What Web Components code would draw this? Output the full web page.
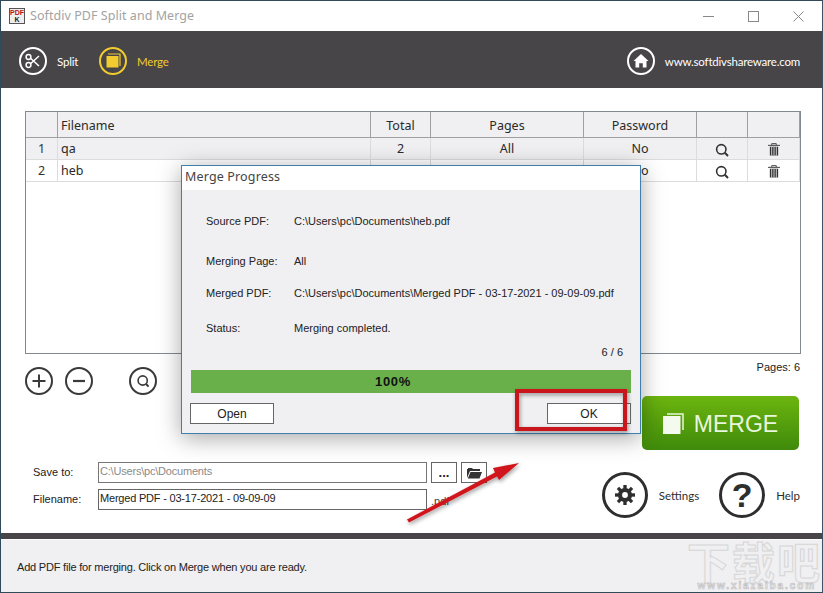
<!DOCTYPE html>
<html>
<head>
<meta charset="utf-8">
<style>
html, body { margin: 0; padding: 0; background: #fff; }
body { width: 823px; height: 593px; overflow: hidden; }
</style>
</head>
<body>
<app-window>
	<title-bar></title-bar>
	<nav-band></nav-band>
	<main-area></main-area>
	<status-bar>Add PDF file for merging. Click on Merge when you are ready.</status-bar>
	<merge-dialog></merge-dialog>
	<red-markup></red-markup>
</app-window>

<script>
const SEGOE = `"Noto Sans", "Open Sans", sans-serif`
const THIN = `Lato, "Open Sans", sans-serif`
const MSSANS = `"Liberation Sans", Arial, sans-serif`

const ICONS = {
	scissors: `<circle cx="9.5" cy="18" r="2.4" fill="none" stroke="currentColor" stroke-width="1.5"/><circle cx="9.5" cy="10" r="2.4" fill="none" stroke="currentColor" stroke-width="1.5"/><path d="M11.5 11.2 20 19M11.5 16.8 20 9" stroke="currentColor" stroke-width="1.5" fill="none"/>`,
	merge: `<path d="M9 7h12v12" fill="none" stroke="currentColor" stroke-width="1.2"/><rect x="7.5" y="9" width="12" height="11.5" fill="currentColor"/>`,
	home: `<path d="M14 7 21.5 14H19.5V20.5H15.8V16.3H12.2V20.5H8.5V14H6.5Z" fill="currentColor"/>`,
	plus: `<path d="M14 7.5V20.5M7.5 14H20.5" stroke="currentColor" stroke-width="2" fill="none"/>`,
	minus: `<path d="M8 14H20" stroke="currentColor" stroke-width="2.2" fill="none"/>`,
	search: `<circle cx="13.7" cy="13.5" r="4.6" fill="none" stroke="currentColor" stroke-width="1.6"/><path d="M17 17l2.6 2.6" stroke="currentColor" stroke-width="2" fill="none"/>`
}

// elements
class AppWindow extends HTMLElement {
	constructor() {
		super()
		this.attachShadow({mode: 'open'}).innerHTML = `
			<style>
				:host { display: flex; flex-direction: column; position: relative; box-sizing: border-box; width: 823px; height: 593px; border: 1px solid #2f4a58; border-right-color: #3a5564; background: #fff; overflow: hidden; }
			</style>
			<slot></slot>
		`
	}
}

class TitleBar extends HTMLElement {
	constructor() {
		super()
		this.attachShadow({mode: 'open'}).innerHTML = `
			<style>
				:host { display: flex; align-items: center; height: 30px; flex: none; padding-left: 8px; box-sizing: border-box; background: #fff; }
				.logo { width: 16px; height: 16px; border: 1px solid #555; box-sizing: border-box; background: #eee; font: bold 7px/7px ${MSSANS}; text-align: center; color: #b11; overflow: hidden; }
				.logo b { display: block; color: #222; }
				.name { margin-left: 5px; padding-bottom: 2px; font: 12.5px ${SEGOE}; letter-spacing: .05px; color: #a3a3a3; flex: 1; }
				svg { display: block; }
				.btns { display: flex; margin-right: 18px; gap: 34px; }
			</style>
			<div class="logo">PDF<b>K</b></div>
			<div class="name">Softdiv PDF Split and Merge</div>
			<div class="btns">
				<svg width="11" height="11"><path d="M0 5.5H11" stroke="#888"/></svg>
				<svg width="11" height="11"><rect x=".5" y=".5" width="10" height="10" fill="none" stroke="#888"/></svg>
				<svg width="11" height="11"><path d="M.5 .5 10.5 10.5M10.5 .5 .5 10.5" stroke="#888"/></svg>
			</div>
		`
	}
}

class RoundIcon extends HTMLElement {
	constructor() {
		super()
		const size = this.getAttribute('size') || 28
		const icon = ICONS[this.getAttribute('icon')] || ''
		this.attachShadow({mode: 'open'}).innerHTML = `
			<style>
				:host { display: block; width: ${size}px; height: ${size}px; flex: none; color: inherit; }
				svg { display: block; }
			</style>
			<svg width="${size}" height="${size}" viewBox="0 0 28 28">
				<circle cx="14" cy="14" r="13" fill="none" stroke="currentColor" stroke-width="2"/>${icon}
			</svg>
		`
	}
}

class NavItem extends HTMLElement {
	constructor() {
		super()
		this.attachShadow({mode: 'open'}).innerHTML = `
			<style>
				:host { display: flex; align-items: center; gap: 10px; color: #fff; font: 11.5px ${THIN}; letter-spacing: -.2px; }
				:host([active]) { color: #f2cc2e; }
			</style>
			<round-icon icon="${this.getAttribute('icon')}"></round-icon>
			<slot></slot>
		`
	}
}

class NavBand extends HTMLElement {
	constructor() {
		super()
		this.attachShadow({mode: 'open'}).innerHTML = `
			<style>
				:host { display: flex; align-items: center; height: 57px; flex: none; padding: 3px 22px 0 18px; box-sizing: border-box; background: #474548; }
				.first { width: 80px; }
				.fill { flex: 1; }
			</style>
			<nav-item class="first" icon="scissors">Split</nav-item>
			<nav-item icon="merge" active>Merge</nav-item>
			<div class="fill"></div>
			<nav-item icon="home">www.softdivshareware.com</nav-item>
		`
	}
}

class FileTable extends HTMLElement {
	constructor() {
		super()
		const search = `<svg width="14" height="14" viewBox="0 0 14 14"><circle cx="6.3" cy="6.3" r="4.7" fill="none" stroke="#333" stroke-width="1.6"/><path d="M9.8 9.8 13 13" stroke="#333" stroke-width="2"/></svg>`
		const bin = `<svg width="12" height="13" viewBox="0 0 13 14"><path d="M0 2.5H13M4 2V.7H9V2" stroke="#333" fill="none"/><path d="M2 4H11V13.5H2Z" fill="#333"/><path d="M4 4V13.5M6.5 4V13.5M9 4V13.5" stroke="#eee" stroke-width=".9"/></svg>`
		const row = (n, name, total, odd) => `
			<div class="c n ${odd}">${n}</div><div class="c l ${odd}">${name}</div><div class="c ${odd}">${total}</div>
			<div class="c ${odd}">All</div><div class="c ${odd}">No</div><div class="c i ${odd}">${search}</div><div class="c i ${odd}">${bin}</div>
		`
		this.attachShadow({mode: 'open'}).innerHTML = `
			<style>
				:host { display: block; height: 243px; flex: none; box-sizing: border-box; border: 1px solid #808a8f; font: 12.5px ${SEGOE}; color: #2a2a2a; background: #fff; }
				.grid { display: grid; grid-template-columns: 32px 313px 60px 153px 113px 51px 52px; grid-template-rows: 26px 22px 22px; }
				.c { display: flex; align-items: center; justify-content: center; border-right: 1px solid #dcdcdc; border-bottom: 1px solid #dcdcdc; box-sizing: border-box; padding-bottom: 1px; }
				.h { background: #f0eff1; border-right-color: #a0a0a0; border-bottom-color: #a0a0a0; padding: 2px 0 0; }
				.h.l { padding-left: 3px; }
				.i { padding: 2px 0 0; }
				.odd { background: #f0eff1; }
				.l { justify-content: flex-start; padding-left: 3px; }
				.n { color: #333; }
				svg { display: block; }
			</style>
			<div class="grid">
				<div class="c h"></div><div class="c h l">Filename</div><div class="c h">Total</div><div class="c h">Pages</div><div class="c h">Password</div><div class="c h"></div><div class="c h"></div>
				${row(1, 'qa', 2, 'odd')}
				${row(2, 'heb', 2, 'even')}
			</div>
		`
	}
}

class PathRow extends HTMLElement {
	constructor() {
		super()
		this.attachShadow({mode: 'open'}).innerHTML = `
			<style>
				:host { display: flex; align-items: center; height: 21px; font: 11px ${MSSANS}; color: #222; }
				.label { width: 65px; padding: 0 0 2px 8px; flex: none; }
				.box { width: 329px; height: 21px; box-sizing: border-box; border: 1px solid #666; padding-left: 1px; line-height: 16px; letter-spacing: -.2px; flex: none; white-space: nowrap; overflow: hidden; }
				:host([muted]) .box { color: #8a8a8a; border-color: #777; }
				::slotted(*) { margin-left: 4px; }
			</style>
			<div class="label">${this.getAttribute('label')}</div>
			<div class="box">${this.getAttribute('value')}</div>
			<slot></slot>
		`
	}
}

class SmallButton extends HTMLElement {
	constructor() {
		super()
		this.attachShadow({mode: 'open'}).innerHTML = `
			<style>
				:host { display: flex; align-items: center; justify-content: center; width: 26px; height: 21px; box-sizing: border-box; border: 1px solid #666; background: #fff; font: bold 13px ${MSSANS}; color: #222; flex: none; }
				:host(.ghost) { border: 0; width: auto; background: none; font: 11px ${MSSANS}; color: #444; padding: 3px 0 0; }
				svg { display: block; }
			</style>
			<slot></slot>
		`
	}
}

class IconLabel extends HTMLElement {
	constructor() {
		super()
		this.attachShadow({mode: 'open'}).innerHTML = `
			<style>
				:host { display: flex; align-items: center; gap: 11px; font: 11.5px ${THIN}; color: #2e2e2e; }
				.ring { width: 46px; height: 46px; box-sizing: border-box; border: 3px solid #2e2e2e; border-radius: 50%; display: flex; align-items: center; justify-content: center; flex: none; }
			</style>
			<div class="ring"><slot name="icon"></slot></div>
			<slot></slot>
		`
	}
}

class MergeButton extends HTMLElement {
	constructor() {
		super()
		this.attachShadow({mode: 'open'}).innerHTML = `
			<style>
				:host { display: flex; align-items: center; justify-content: center; gap: 10px; width: 157px; height: 54px; margin-right: 2px; box-sizing: border-box; border-radius: 5px; background: linear-gradient(#6cb50f, #3f8a0b); color: #e9f6dd; font: 23px ${MSSANS}; padding-top: 1px; }
				span { padding-top: 1px; }
				svg { display: block; }
			</style>
			<svg width="21" height="21" viewBox="0 0 21 21"><path d="M4 1H20V17" fill="none" stroke="#e9f6dd" stroke-width="1.5"/><rect y="3" width="17.5" height="18" fill="#f4faee"/></svg>
			<span><slot></slot></span>
		`
	}
}

class MainArea extends HTMLElement {
	constructor() {
		super()
		const gear = Array.from({length: 8}, (_, i) => `<rect x="10" y="0" width="4" height="5" fill="#2e2e2e" transform="rotate(${i * 45} 12 12)"/>`).join('')
		this.attachShadow({mode: 'open'}).innerHTML = `
			<style>
				:host { display: flex; flex-direction: column; flex: 1; min-height: 0; padding: 23px 21px 0 24px; box-sizing: border-box; background: #fff; color: #3a3a3a; }
				.lower { display: flex; justify-content: space-between; flex: 1; }
				.left { display: flex; flex-direction: column; padding: 13px 0 23px; }
				.tools { display: flex; gap: 12px; }
				.tools .far { margin-left: 24px; }
				.form { display: flex; flex-direction: column; gap: 6px; margin-top: auto; }
				.right { display: flex; flex-direction: column; align-items: flex-end; width: 199px; padding-top: 7px; }
				.pages { font: 11px ${MSSANS}; color: #222; height: 35px; padding-right: 1px; }
				.extras { display: flex; gap: 20px; margin-top: 22px; margin-right: 1px; }
				.q { font: bold 34px/1 ${MSSANS}; color: #2e2e2e; }
				svg { display: block; }
			</style>
			<file-table></file-table>
			<div class="lower">
				<div class="left">
					<div class="tools">
						<round-icon icon="plus"></round-icon>
						<round-icon icon="minus"></round-icon>
						<round-icon class="far" icon="search"></round-icon>
					</div>
					<div class="form">
						<path-row label="Save to:" value="C:\\Users\\pc\\Documents" muted>
							<small-button>...</small-button>
							<small-button>
								<svg width="15" height="12" viewBox="0 0 15 12"><path d="M0 11V2H1V1H5L6 2H13V4H3L0 11ZM3.5 5H15L12.5 11.5H.8Z" fill="#333"/></svg>
							</small-button>
						</path-row>
						<path-row label="Filename:" value="Merged PDF - 03-17-2021 - 09-09-09">
							<small-button class="ghost">.pdf</small-button>
						</path-row>
					</div>
				</div>
				<div class="right">
					<div class="pages">Pages: 6</div>
					<merge-button>MERGE</merge-button>
					<div class="extras">
						<icon-label>
							<svg slot="icon" width="20" height="20" viewBox="0 0 24 24">${gear}<circle cx="12" cy="12" r="6" fill="none" stroke="#2e2e2e" stroke-width="5"/></svg>
							Settings
						</icon-label>
						<icon-label>
							<span slot="icon" class="q">?</span>
							Help
						</icon-label>
					</div>
				</div>
			</div>
		`
	}
}

class StatusBar extends HTMLElement {
	constructor() {
		super()
		this.attachShadow({mode: 'open'}).innerHTML = `
			<style>
				:host { display: flex; align-items: center; position: relative; height: 59px; flex: none; box-sizing: border-box; border-top: 6px solid #474548; padding: 2px 0 0 16px; background: #f0eff1; font: 11px ${MSSANS}; letter-spacing: -.2px; color: #222; box-shadow: inset 0 1px 0 #fff; }
				.mark { position: absolute; right: 0; top: 0; height: 43px; font: bold 43px/43px "Noto Sans CJK SC", sans-serif; letter-spacing: 2px; color: transparent; -webkit-text-stroke: 1px #d6d6d6; white-space: nowrap; }
				.url { position: absolute; right: 6px; top: 43px; height: 8px; font: bold 10px/8px ${MSSANS}; color: transparent; -webkit-text-stroke: .6px #bdbdbd; letter-spacing: 1.9px; }
			</style>
			<slot></slot>
			<div class="mark">下载吧</div>
			<div class="url">www.xiazaiba.com</div>
		`
	}
}

class InfoRow extends HTMLElement {
	constructor() {
		super()
		this.attachShadow({mode: 'open'}).innerHTML = `
			<style>
				:host { display: flex; font: 11px/14px ${MSSANS}; color: #222; white-space: nowrap; }
				.k { width: 88px; flex: none; }
			</style>
			<div class="k">${this.getAttribute('label')}</div>
			<div><slot></slot></div>
		`
	}
}

class DialogButton extends HTMLElement {
	constructor() {
		super()
		this.attachShadow({mode: 'open'}).innerHTML = `
			<style>
				:host { display: flex; align-items: center; justify-content: center; width: 84px; height: 21px; box-sizing: border-box; border: 1px solid #666; background: #fff; font: 12px ${MSSANS}; color: #222; }
			</style>
			<slot></slot>
		`
	}
}

class MergeDialog extends HTMLElement {
	constructor() {
		super()
		this.attachShadow({mode: 'open'}).innerHTML = `
			<style>
				:host { display: flex; flex-direction: column; position: absolute; left: 180px; top: 164px; width: 460px; height: 269px; box-sizing: border-box; border: 1px solid #3f7fae; background: #f0eff1; box-shadow: 0 4px 22px rgba(0,0,0,.35); }
				.head { height: 24px; flex: none; background: #fff; font: 12.5px/22px ${SEGOE}; letter-spacing: .15px; color: #444; padding-left: 3px; }
				.body { flex: 1; display: flex; flex-direction: column; padding: 24px 9px 8px; }
				.info { display: flex; flex-direction: column; padding-left: 15px; }
				.count { height: 13px; text-align: right; font: 11px/13px ${MSSANS}; color: #222; padding-right: 8px; margin-top: 11px; }
				.bar { height: 23px; margin-top: 11px; padding-right: 36px; background: #6ab04a; font: bold 13px/24px ${MSSANS}; letter-spacing: .7px; text-align: center; color: #111; }
				.foot { display: flex; justify-content: space-between; margin-top: 10px; margin-left: -1px; }
			</style>
			<div class="head">Merge Progress</div>
			<div class="body">
				<div class="info">
					<info-row label="Source PDF:">C:\\Users\\pc\\Documents\\heb.pdf</info-row>
					<info-row label="Merging Page:" style="margin-top:26px">All</info-row>
					<info-row label="Merged PDF:" style="margin-top:18px">C:\\Users\\pc\\Documents\\Merged PDF - 03-17-2021 - 09-09-09.pdf</info-row>
					<info-row label="Status:" style="margin-top:21px">Merging completed.</info-row>
				</div>
				<div class="count">6 / 6</div>
				<div class="bar">100%</div>
				<div class="foot">
					<dialog-button>Open</dialog-button>
					<dialog-button>OK</dialog-button>
				</div>
			</div>
		`
	}
}

// annotations drawn on top of the screenshot
class RedMarkup extends HTMLElement {
	constructor() {
		super()
		this.attachShadow({mode: 'open'}).innerHTML = `
			<style>
				:host { position: absolute; left: -1px; top: -1px; width: 823px; height: 593px; pointer-events: none; }
				svg { display: block; overflow: visible; }
			</style>
			<svg width="823" height="593">
				<defs><filter id="s" x="-20%" y="-20%" width="140%" height="150%"><feDropShadow dx="1" dy="2" stdDeviation="2" flood-color="#000" flood-opacity=".4"/></filter></defs>
				<rect x="517" y="391" width="108" height="38" fill="none" stroke="#c9141c" stroke-width="4" filter="url(#s)"/>
				<path d="M407 519.5 495 472.5 493 468 519 463 499 480 497 476.5 409 522.5Z" fill="#d0151d" filter="url(#s)"/>
			</svg>
		`
	}
}

customElements.define('round-icon', RoundIcon)
customElements.define('nav-item', NavItem)
customElements.define('file-table', FileTable)
customElements.define('path-row', PathRow)
customElements.define('small-button', SmallButton)
customElements.define('icon-label', IconLabel)
customElements.define('merge-button', MergeButton)
customElements.define('info-row', InfoRow)
customElements.define('dialog-button', DialogButton)
customElements.define('title-bar', TitleBar)
customElements.define('nav-band', NavBand)
customElements.define('main-area', MainArea)
customElements.define('status-bar', StatusBar)
customElements.define('merge-dialog', MergeDialog)
customElements.define('red-markup', RedMarkup)
customElements.define('app-window', AppWindow)
</script>
</body>
</html>
